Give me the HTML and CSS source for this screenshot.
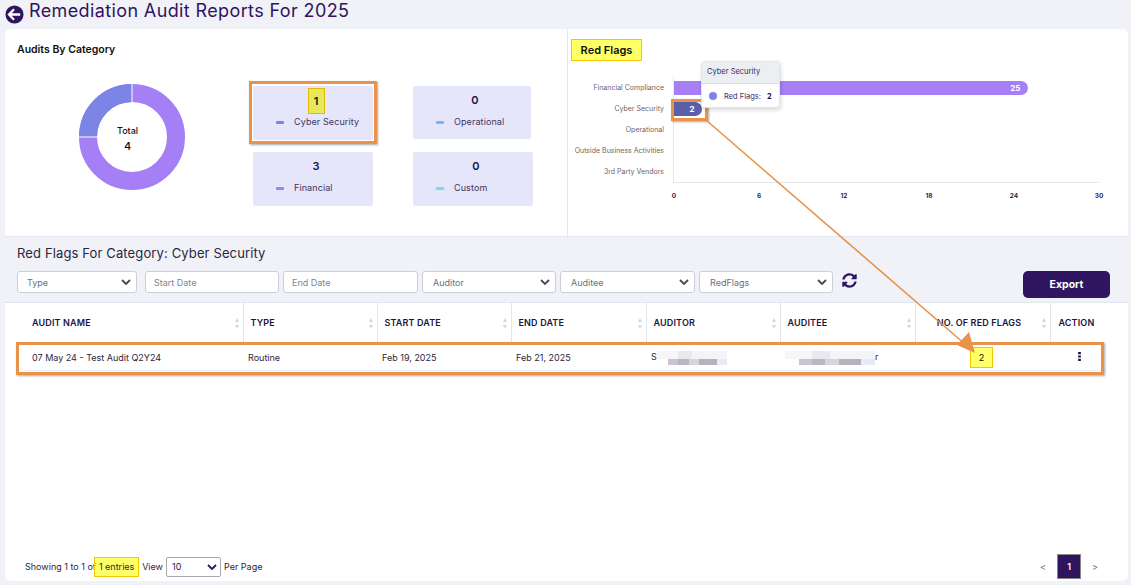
FILE: index.html
```html
<!DOCTYPE html>
<html lang="en">
<head>
    <meta charset="UTF-8">
    <title>Remediation Audit Reports For 2025</title>
    <link rel="stylesheet" href="styles.css">
</head>
<body>
    <div class="page">
        <header class="page-head">
            <svg class="back-icon" viewBox="0 0 20 20" width="19" height="19">
                <circle cx="10" cy="10" r="9.5" fill="#2f1460"/>
                <path d="M9.5 4.5 4.2 10l5.3 5.5M4.6 10H16" fill="none" stroke="#fff" stroke-width="2.4"/>
            </svg>
            <h1>Remediation Audit Reports For 2025</h1>
        </header>

        <main class="card">
            <section class="top-row">
                <div class="panel-left">
                    <h2 class="panel-title">Audits By Category</h2>
                    <div class="category-wrap">
                        <div class="donut">
                            <svg viewBox="0 0 108 108" width="108" height="108">
                                <circle cx="54" cy="54" r="44" fill="none" stroke="#a57ff5" stroke-width="18"/>
                                <path d="M54 10A44 44 0 0 0 10 54" fill="none" stroke="#7c85e6" stroke-width="18"/>
                                <path d="M54 0V19M0 54H19" stroke="#fff" stroke-width="1"/>
                            </svg>
                            <div class="donut-text">
                                <span class="donut-label">Total</span>
                                <span class="donut-num">4</span>
                            </div>
                        </div>
                        <div class="category-grid">
                            <div class="cat-card">
                                <span class="cat-num cat-num-hl">1</span>
                                <span class="cat-name"><i class="dash dash-cyber"></i>Cyber Security</span>
                            </div>
                            <div class="cat-card cat-narrow">
                                <span class="cat-num">0</span>
                                <span class="cat-name"><i class="dash dash-oper"></i>Operational</span>
                            </div>
                            <div class="cat-card">
                                <span class="cat-num">3</span>
                                <span class="cat-name"><i class="dash dash-fin"></i>Financial</span>
                            </div>
                            <div class="cat-card">
                                <span class="cat-num">0</span>
                                <span class="cat-name"><i class="dash dash-custom"></i>Custom</span>
                            </div>
                        </div>
                    </div>
                </div>

                <div class="panel-right">
                    <h2 class="panel-title flags-title">Red Flags</h2>
                    <div class="chart">
                        <div class="chart-row">
                            <span class="chart-label">Financial Compliance</span>
                            <div class="chart-track"><div class="bar bar-purple" style="width: 83.4%">25</div></div>
                        </div>
                        <div class="chart-row">
                            <span class="chart-label">Cyber Security</span>
                            <div class="chart-track"><div class="bar bar-indigo" style="width: 6.7%">2</div></div>
                        </div>
                        <div class="chart-row">
                            <span class="chart-label">Operational</span>
                            <div class="chart-track"></div>
                        </div>
                        <div class="chart-row">
                            <span class="chart-label">Outside Business Activities</span>
                            <div class="chart-track"></div>
                        </div>
                        <div class="chart-row">
                            <span class="chart-label">3rd Party Vendors</span>
                            <div class="chart-track"></div>
                        </div>
                        <div class="chart-axis">
                            <span>0</span><span>6</span><span>12</span><span>18</span><span>24</span><span>30</span>
                        </div>
                    </div>
                </div>
            </section>

            <section class="filter-band">
                <h2 class="filter-title">Red Flags For Category: Cyber Security</h2>
                <div class="filter-row">
                    <select class="field field-type"><option>Type</option></select>
                    <input class="field field-start" type="text" placeholder="Start Date">
                    <input class="field field-end" type="text" placeholder="End Date">
                    <select class="field field-std"><option>Auditor</option></select>
                    <select class="field field-wide"><option>Auditee</option></select>
                    <select class="field field-std"><option>RedFlags</option></select>
                    <svg class="refresh-icon" viewBox="0 0 512 512" width="15" height="15">
                        <path fill="#2f1460" d="M370.72 133.28C339.46 104 298.9 87.96 255.85 88c-77.46.07-144.33 53.18-162.8 126.85-1.34 5.36-6.12 9.15-11.65 9.15H24.1c-7.5 0-13.2-6.8-11.8-14.16C33.9 95.14 134.2 8 255 8c66.2 0 126.4 26.04 170.8 68.4L461.4 40.9c15.1-15.1 41-4.4 41 17v134.1c0 13.3-10.7 24-24 24H344.3c-21.4 0-32.1-25.9-17-41l43.4-41.7zM32 296h133.9c21.4 0 32.1 25.9 17 41l-41.8 41.8c31.3 29.3 71.9 45.3 114.9 45.3 77.4-.1 144.3-53.1 162.8-126.8 1.3-5.4 6.1-9.2 11.6-9.2h57.3c7.5 0 13.2 6.8 11.8 14.2C478.1 417 377.8 504 257 504c-66.2 0-126.4-26-170.8-68.4l-35.6 35.6c-15.1 15.1-41 4.4-41-17V320c0-13.3 10.7-24 24-24z"/>
                    </svg>
                    <button class="export-btn">Export</button>
                </div>
            </section>

            <section class="table-wrap">
                <table class="audit-table">
                    <thead>
                        <tr>
                            <th>AUDIT NAME<i class="sort"></i></th>
                            <th>TYPE<i class="sort"></i></th>
                            <th>START DATE<i class="sort"></i></th>
                            <th>END DATE<i class="sort"></i></th>
                            <th>AUDITOR<i class="sort"></i></th>
                            <th>AUDITEE<i class="sort"></i></th>
                            <th class="th-flags">NO. OF RED FLAGS<i class="sort"></i></th>
                            <th class="th-action">ACTION</th>
                        </tr>
                    </thead>
                    <tbody>
                        <tr>
                            <td>07 May 24 - Test Audit Q2Y24</td>
                            <td>Routine</td>
                            <td>Feb 19, 2025</td>
                            <td>Feb 21, 2025</td>
                            <td><div class="masked">S<i class="mosaic mosaic-a"></i></div></td>
                            <td><div class="masked"><i class="mosaic mosaic-b"></i>r</div></td>
                            <td class="td-flags"><span class="flag-count">2</span></td>
                            <td class="td-action">
                                <svg viewBox="0 0 3 10" width="3" height="9"><path fill="#1c1540" d="M0 0h3v2.4H0zM0 3.8h3v2.4H0zM0 7.6h3V10H0z"/></svg>
                            </td>
                        </tr>
                    </tbody>
                </table>
            </section>

            <footer class="table-foot">
                <div class="entries">
                    <span>Showing 1 to 1 of</span>
                    <span class="entries-hl">1 entries</span>
                    <span class="view-label">View</span>
                    <select class="page-size"><option>10</option></select>
                    <span>Per Page</span>
                </div>
                <nav class="pager">
                    <span class="pager-arrow">&lt;</span>
                    <span class="pager-num">1</span>
                    <span class="pager-arrow">&gt;</span>
                </nav>
            </footer>
        </main>

        <!-- review marks drawn on top of the page -->
        <div class="mark-box box-card"></div>
        <div class="mark-box box-bar"></div>
        <div class="mark-box box-row"></div>

        <div class="tooltip">
            <div class="tooltip-head">Cyber Security</div>
            <div class="tooltip-body"><i class="tooltip-dot"></i>Red Flags: <b>2</b></div>
        </div>

        <svg class="mark-arrow" viewBox="0 0 1131 585" width="1131" height="585">
            <path d="M706 120 966 345" fill="none" stroke="#e8924a" stroke-width="1.6"/>
            <path d="M975 353 957 345 969 332Z" fill="#e8924a"/>
        </svg>
    </div>
</body>
</html>
```

FILE: styles.css
```css
* {
    box-sizing: border-box;
}
html, body {
    margin: 0;
    height: 100%;
}
body {
    font-family: Inter, 'Liberation Sans', sans-serif;
    background-color: #f1f2f8;
    color: #1c1540;
    overflow: hidden;
}
.page {
    position: relative;
    width: 1131px;
    height: 585px;
    padding: 0 3px 4px 5px;
    display: flex;
    flex-direction: column;
}

/* header */
.page-head {
    height: 29px;
    display: flex;
    align-items: flex-start;
    gap: 5px;
    padding-top: 2px;
}
.back-icon {
    flex: none;
    margin-top: 3px;
}
h1 {
    margin: 0;
    font-size: 18px;
    line-height: 18px;
    font-weight: 400;
    letter-spacing: 0.38px;
    color: #2f1460;
}

/* main card */
.card {
    flex: 1;
    background: #fff;
    border-radius: 6px;
    display: flex;
    flex-direction: column;
    overflow: hidden;
}
.top-row {
    height: 207px;
    display: flex;
}
.panel-left {
    width: 563px;
    padding: 14px 12px 0;
    border-right: 1px solid #e6e8f0;
}
.panel-right {
    flex: 1;
    padding: 10px 0 0 3px;
}
.panel-title {
    margin: 0;
    font-size: 10.5px;
    line-height: 13px;
    font-weight: 600;
    color: #111;
}
.flags-title {
    width: 71px;
    height: 22px;
    font-size: 11px;
    line-height: 20px;
    text-align: center;
    background: #ffff66;
    border: 1px solid #f3c800;
}

/* donut and category cards */
.category-wrap {
    display: flex;
    padding: 30px 0 0 61px;
}
.donut {
    position: relative;
    width: 108px;
    height: 108px;
    margin-top: -3px;
}
.donut-text {
    position: absolute;
    inset: 0;
    display: flex;
    flex-direction: column;
    align-items: center;
    justify-content: center;
    gap: 3px;
    padding-right: 9px;
    padding-top: 3px;
}
.donut-label {
    font-size: 9px;
    font-weight: 500;
    color: #111;
}
.donut-num {
    font-size: 11px;
    font-weight: 500;
    color: #111;
}
.category-grid {
    margin-left: 67px;
    display: grid;
    grid-template-columns: 120px 120px;
    grid-auto-rows: 54px;
    column-gap: 40px;
    row-gap: 12px;
}
.cat-card {
    background: #e6e6fa;
    border-radius: 2px;
    display: flex;
    flex-direction: column;
    align-items: center;
    padding-top: 7px;
}
.cat-narrow {
    width: 118px;
    height: 53px;
}
.cat-num {
    font-size: 11px;
    line-height: 14px;
    font-weight: 600;
    color: #1c1540;
    transform: translateX(3px);
}
/* highlighted count: grows out of the row without moving the label */
.cat-num-hl {
    width: 17px;
    height: 26px;
    margin: -5px 0 -7px;
    line-height: 24px;
    text-align: center;
    background: #e8e85c;
    border: 1px solid #e3bb00;
    color: #111;
}
.cat-name {
    align-self: flex-start;
    margin-top: 9px;
    padding-left: 23px;
    font-size: 9px;
    line-height: 12px;
    letter-spacing: 0.1px;
    color: #3b3560;
    display: flex;
    align-items: center;
}
.dash {
    width: 8px;
    height: 3px;
    border-radius: 1px;
    margin-right: 10px;
}
.dash-cyber { background: #7c85e6; }
.dash-oper { background: #76b8f0; }
.dash-fin { background: #a57ff5; }
.dash-custom { background: #7fd8ea; }

/* bar chart */
.chart {
    margin-top: 16px;
    display: flex;
    flex-direction: column;
}
.chart-row {
    height: 21px;
    display: flex;
    align-items: center;
}
.chart-label {
    width: 93px;
    flex: none;
    text-align: right;
    white-space: nowrap;
    font-size: 7px;
    color: #75645f;
}
.chart-track {
    margin-left: 9px;
    width: 426px;
    height: 21px;
    padding: 4px 0;
    border-left: 1px solid #e6e8f0;
}
.bar {
    height: 14px;
    border-radius: 0 7px 7px 0;
    color: #fff;
    font-size: 8px;
    font-weight: 700;
    line-height: 14px;
    text-align: right;
    padding-right: 8px;
}
.bar-purple { background: #a57ff5; }
.bar-indigo { background: #5a5fa8; }
.chart-axis {
    margin-left: 102px;
    width: 426px;
    padding: 9px 0 0 1px;
    border-top: 1px solid #e6e8f0;
    display: flex;
    justify-content: space-between;
    font-size: 6.5px;
    font-weight: 700;
    color: #2a2a4a;
}
.chart-axis span {
    width: 0;
    display: flex;
    justify-content: center;
}

/* filters */
.filter-band {
    height: 67px;
    background: #f1f2f8;
    border-top: 1px solid #e4e6ef;
    border-bottom: 1px solid #e4e6ef;
    padding: 8px 18px 0 12px;
}
.filter-title {
    margin: 0;
    font-size: 13px;
    line-height: 16px;
    font-weight: 400;
    letter-spacing: 0.13px;
    color: #2b2640;
}
.filter-row {
    margin-top: 10px;
    display: flex;
    align-items: flex-start;
}
.field {
    height: 22px;
    border: 1px solid #ccced8;
    border-radius: 3px;
    background-color: #fff;
    font-family: inherit;
    font-size: 9px;
    color: #6c7080;
    padding: 0 10px;
    margin-right: 4px;
}
.field::placeholder {
    color: #80848f;
    opacity: 1;
}
input.field {
    padding: 0 8px;
}
select.field {
    appearance: none;
    background-image: url("data:image/svg+xml,%3Csvg xmlns='http://www.w3.org/2000/svg' viewBox='0 0 10 6'%3E%3Cpath d='M1 1l4 4 4-4' fill='none' stroke='%23444858' stroke-width='1.8'/%3E%3C/svg%3E");
    background-repeat: no-repeat;
    background-position: right 5px center;
    background-size: 10px 6px;
}
.field-type {
    width: 120px;
    margin-right: 8px;
    padding-left: 9px;
}
.field-start {
    width: 134px;
}
.field-end {
    width: 135px;
}
.field-std {
    width: 134px;
}
.field-wide {
    width: 135px;
}
.refresh-icon {
    margin: 2px 0 0 5px;
    flex: none;
}
.export-btn {
    margin-left: auto;
    width: 87px;
    height: 27px;
    border: none;
    border-radius: 5px;
    background: #2f1460;
    color: #fff;
    font-family: inherit;
    font-size: 10.5px;
    font-weight: 700;
}

/* table */
.table-wrap {
    flex: 1;
    padding-left: 20px;
}
.audit-table {
    width: 1078px;
    table-layout: fixed;
    border-collapse: collapse;
}
.audit-table th:nth-child(1) { width: 218px; }
.audit-table th:nth-child(2) { width: 134px; }
.audit-table th:nth-child(3) { width: 134px; }
.audit-table th:nth-child(4) { width: 135px; }
.audit-table th:nth-child(5) { width: 134px; }
.audit-table th:nth-child(6) { width: 135px; }
.audit-table th:nth-child(7) { width: 135px; }
.audit-table th {
    position: relative;
    height: 40px;
    padding: 0 7px 1px;
    text-align: left;
    font-size: 9px;
    font-weight: 600;
    letter-spacing: 0.15px;
    color: #1c1540;
    border-right: 1px solid #e4e6ef;
}
.audit-table th:last-child {
    border-right: none;
}
.audit-table .th-flags {
    text-align: center;
    padding-right: 7px;
    padding-left: 0;
}
.audit-table .th-action {
    padding-left: 8px;
}
.sort {
    position: absolute;
    right: 3px;
    top: 15px;
    width: 5px;
    height: 11px;
}
.sort::before, .sort::after {
    content: "";
    position: absolute;
    left: 0;
    border-left: 2.5px solid transparent;
    border-right: 2.5px solid transparent;
}
.sort::before {
    top: 0;
    border-bottom: 4px solid #d5d7de;
}
.sort::after {
    bottom: 0;
    border-top: 4px solid #d5d7de;
}
.audit-table td {
    height: 27px;
    padding: 3px 5px 0;
    font-size: 9px;
    color: #2b2640;
    border-bottom: 1px solid #eceef4;
}
.audit-table td:first-child {
    padding-left: 7px;
}
.masked {
    white-space: nowrap;
}
.mosaic {
    display: inline-block;
    height: 14px;
    vertical-align: middle;
    background:
        linear-gradient(90deg, #fff 0 15%, #c7c5d0 15% 30%, #b9b7c6 30% 45%, #d8d4da 45% 60%, #b5b3c2 60% 85%, #e6ebf4 85%) 0 8px / 100% 6px no-repeat,
        linear-gradient(90deg, #f6f6f8 0 30%, #e9e8ec 30% 50%, #f4f3f5 50% 100%) 0 0 / 100% 8px no-repeat;
}
.mosaic-a {
    width: 70px;
}
.mosaic-b {
    width: 90px;
}
.td-flags {
    text-align: center;
    padding-right: 7px !important;
}
.flag-count {
    display: inline-flex;
    align-items: center;
    justify-content: center;
    width: 23px;
    height: 21px;
    background: #ffff66;
    border: 1px solid #f3c800;
    color: #111;
}
.td-action {
    text-align: center;
    padding-right: 0 !important;
}

/* footer */
.table-foot {
    height: 33px;
    padding: 4px 30px 0 20px;
    display: flex;
    align-items: center;
    justify-content: space-between;
    font-size: 9px;
    color: #2b2640;
}
.entries {
    display: flex;
    align-items: center;
}
.entries-hl {
    width: 45px;
    height: 20px;
    margin-left: -2px;
    line-height: 18px;
    text-align: center;
    background: rgba(255, 255, 0, 0.6);
    border: 1px solid #f3c800;
}
.view-label {
    margin: 0 3px 0 3px;
}
.page-size {
    appearance: none;
    width: 55px;
    height: 20px;
    margin-right: 3px;
    padding: 0 5px;
    border: 1px solid #a8a8b0;
    border-radius: 2px;
    background-color: #fff;
    font-family: inherit;
    font-size: 9px;
    color: #2f1460;
    background-image: url("data:image/svg+xml,%3Csvg xmlns='http://www.w3.org/2000/svg' viewBox='0 0 10 6'%3E%3Cpath d='M1 1l4 4 4-4' fill='none' stroke='%232f1460' stroke-width='1.8'/%3E%3C/svg%3E");
    background-repeat: no-repeat;
    background-position: right 3px center;
    background-size: 10px 6px;
}
.pager {
    display: flex;
    align-items: center;
    gap: 11px;
}
.pager-arrow {
    font-size: 9px;
    color: #667;
}
.pager-num {
    width: 24px;
    height: 25px;
    background: #2f1460;
    border: 1px solid #888;
    color: #fff;
    font-size: 9px;
    font-weight: 600;
    display: flex;
    align-items: center;
    justify-content: center;
}

/* overlays */
.mark-box {
    position: absolute;
    border: 3px solid #e8924a;
    box-shadow: 1px 1px 2px rgba(0, 0, 0, 0.35);
}
.box-card {
    left: 249px;
    top: 81px;
    width: 128px;
    height: 63px;
}
.box-bar {
    left: 671px;
    top: 99px;
    width: 37px;
    height: 22px;
}
.box-row {
    left: 16px;
    top: 342px;
    width: 1088px;
    height: 33px;
}
.tooltip {
    position: absolute;
    left: 701px;
    top: 61px;
    width: 79px;
    height: 47px;
    background: #fff;
    border: 1px solid #e3e5ea;
    border-radius: 3px;
    box-shadow: 1px 2px 4px rgba(0, 0, 0, 0.15);
    font-size: 7.5px;
    color: #3b2a6a;
}
.tooltip-head {
    height: 22px;
    padding: 0 5px;
    line-height: 20px;
    background: #eceff1;
    border-bottom: 1px solid #ddd;
}
.tooltip-body {
    display: flex;
    align-items: center;
    white-space: pre;
    height: 24px;
    padding-left: 7px;
}
.tooltip-body b {
    margin-left: 4px;
    color: #1c1540;
}
.tooltip-dot {
    width: 8px;
    height: 8px;
    border-radius: 50%;
    background: #7c85e6;
    margin-right: 7px;
}
.mark-arrow {
    position: absolute;
    left: 0;
    top: 0;
    pointer-events: none;
}
```
